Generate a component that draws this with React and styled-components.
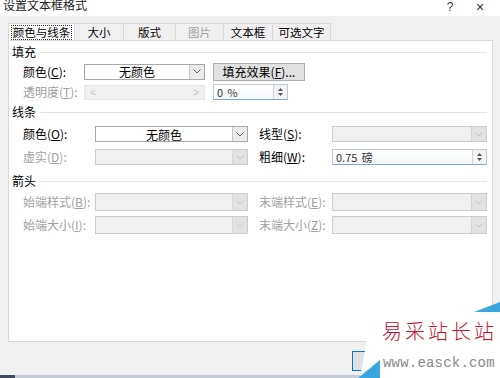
import React from 'react'
import styled, { createGlobalStyle } from 'styled-components'

const Global = createGlobalStyle`
  html, body { margin: 0; padding: 0; background: #f0f0f0; }
  body { font-family: "Noto Sans CJK SC", "Liberation Sans", sans-serif; font-size: 12px; color: #000; }
`

const Window = styled.div`
  position: relative;
  width: 500px;
  height: 378px;
  overflow: hidden;
  background: #f0f0f0;
  display: flex;
  flex-direction: column;
`

const TitleBar = styled.div`
  height: 16px;
  background: #fff;
  display: flex;
  align-items: flex-start;
  overflow: hidden;
`

const Title = styled.span`
  padding-left: 3px;
  flex: 1;
  color: #222;
  margin-top: -2px;
  line-height: 14px;
  font-size: 12px;
`

const TitleBtn = styled.span`
  width: ${p => p.w}px;
  text-align: center;
  color: #333;
  line-height: 14px;
  font-family: "Liberation Sans", sans-serif;
  font-size: ${p => p.fs}px;
`

const Tabs = styled.div`
  display: flex;
  margin: 7px 0 0 8px;
  height: 17px;
`

const Tab = styled.div`
  width: ${p => p.w}px;
  box-sizing: border-box;
  border: 1px solid #d9d9d9;
  border-bottom: none;
  margin-left: -1px;
  background: ${p => (p.active ? '#fff' : '#f0f0f0')};
  display: flex;
  align-items: center;
  justify-content: center;
  line-height: 13px;
  font-size: 11.5px;
  white-space: nowrap;
  color: ${p => (p.dim ? '#a0a0a0' : '#000')};
  &:first-child { margin-left: 0; }
  span {
    padding: 0 1px;
    border: ${p => (p.active ? '1px dotted #333' : '1px solid transparent')};
  }
`

const Panel = styled.div`
  margin: 0 7px 0 8px;
  height: 302px;
  box-sizing: border-box;
  border: 1px solid #d9d9d9;
  background: #fff;
  padding: 4px 5px 0 3px;
  display: flex;
  flex-direction: column;
`

const Section = styled.div`
  display: flex;
  flex-direction: column;
  gap: ${p => p.gap}px;
  margin-bottom: ${p => p.mb || 0}px;
`

const Header = styled.div`
  display: flex;
  align-items: center;
  gap: 4px;
  height: 14px;
  line-height: 14px;
  &::after {
    content: '';
    flex: 1;
    height: 1px;
    background: #e3e3e3;
  }
`

const Row = styled.div`
  display: flex;
  align-items: center;
  padding-left: 11px;
  height: ${p => p.h}px;
`

const Label = styled.div`
  width: ${p => p.w}px;
  flex-shrink: 0;
  color: ${p => (p.dim ? '#a0a0a0' : '#000')};
  line-height: 14px;
  white-space: nowrap;
  margin-left: ${p => p.ml || 0}px;
`

const ComboBox = styled.div`
  width: ${p => p.w}px;
  height: ${p => p.h}px;
  box-sizing: border-box;
  flex-shrink: 0;
  display: flex;
  border: 1px solid ${p => (p.disabled ? '#cccccc' : '#a8a8a8')};
  background: ${p => (p.disabled ? '#f0f0f0' : '#fff')};
`

const ComboText = styled.div`
  flex: 1;
  display: flex;
  align-items: center;
  justify-content: center;
  line-height: 13px;
`

const ArrowBox = styled.div`
  width: 14px;
  border-left: 1px solid ${p => (p.disabled ? '#d6d6d6' : '#c8c8c8')};
  background: ${p => (p.disabled ? '#e2e2e2' : '#ececec')};
  display: flex;
  align-items: center;
  justify-content: center;
`

const Button = styled.div`
  width: ${p => p.w}px;
  height: ${p => p.h}px;
  flex-shrink: 0;
  box-sizing: border-box;
  margin-left: ${p => p.ml || 0}px;
  border: 1px solid ${p => (p.primary ? '#0078d7' : '#adadad')};
  background: #e1e1e1;
  display: flex;
  align-items: center;
  justify-content: center;
  line-height: 13px;
`

const Slider = styled.div`
  width: 121px;
  height: 15px;
  box-sizing: border-box;
  border: 1px solid #e6e6e6;
  background: #f0f0f0;
  display: flex;
  align-items: center;
  justify-content: space-between;
  padding: 0 5px;
  color: #c4c4c4;
  font-family: "Liberation Sans", sans-serif;
  font-size: 10px;
`

const Spin = styled.div`
  width: ${p => p.w}px;
  height: ${p => p.h}px;
  box-sizing: border-box;
  margin-left: ${p => p.ml || 0}px;
  border: 1px solid #b9c9da;
  border-bottom-color: #7fa7d0;
  background: linear-gradient(#fff, #f4f7fb);
  display: flex;
`

const SpinText = styled.div`
  flex: 1;
  padding-left: 3px;
  display: flex;
  align-items: center;
  line-height: 13px;
  font-size: 11px;
  color: #333;
  word-spacing: 2px;
`

const SpinArrows = styled.div`
  width: 13px;
  border-left: 1px solid #d4d4d4;
  background: #f3f3f3;
  display: flex;
  flex-direction: column;
  align-items: center;
  justify-content: center;
  gap: 2px;
`

const Footer = styled.div`
  flex: 1;
  display: flex;
  align-items: flex-start;
  padding: 9px 0 0 352px;
  gap: 6px;
  overflow: hidden;
`

const Taskbar = styled.div`
  height: 3px;
  background: linear-gradient(90deg, #3f4c5c 0 15px, #c3ccd6 15px);
`

const Watermark = styled.div`
  position: absolute;
  right: 0;
  bottom: 0;
  width: 142px;
  height: 76px;
`

const MarkBg = styled.svg`
  position: absolute;
  inset: 0;
`

const MarkTitle = styled.div`
  position: absolute;
  left: 24px;
  top: 17px;
  color: #c8102e;
  font-size: 20px;
  letter-spacing: 3px;
  line-height: 24px;
  font-family: "Noto Sans CJK SC", serif;
  font-weight: 300;
  white-space: nowrap;
`

const MarkUrl = styled.div`
  position: absolute;
  left: 25px;
  top: 53px;
  color: #8a8a8a;
  font-family: "Liberation Mono", monospace;
  font-size: 14px;
  line-height: 16px;
  letter-spacing: 0.2px;
  white-space: nowrap;
`

const Chevron = ({ dim }) => (
  <svg width="8" height="5" viewBox="0 0 8 5">
    <path d="M0.5 0.5 L4 4 L7.5 0.5" fill="none" stroke={dim ? '#c4c4c4' : '#606060'} strokeWidth="1" />
  </svg>
)

const Tri = ({ up }) => (
  <svg width="5" height="3" viewBox="0 0 5 3">
    <path d={up ? 'M0 3 L2.5 0 L5 3 Z' : 'M0 0 L2.5 3 L5 0 Z'} fill="#555" />
  </svg>
)

const Combo = ({ w, h = 16, text, disabled }) => (
  <ComboBox w={w} h={h} disabled={disabled}>
    <ComboText>{text}</ComboText>
    <ArrowBox disabled={disabled}><Chevron dim={disabled} /></ArrowBox>
  </ComboBox>
)

const tabs = [
  { t: '颜色与线条', w: 67, active: true },
  { t: '大小', w: 50 },
  { t: '版式', w: 53 },
  { t: '图片', w: 49, dim: true },
  { t: '文本框', w: 50 },
  { t: '可选文字', w: 59 },
]

export default function App() {
  return (
    <Window>
      <Global />
      <TitleBar>
        <Title>设置文本框格式</Title>
        <TitleBtn w={20} fs={12}>?</TitleBtn>
        <TitleBtn w={40} fs={14}>×</TitleBtn>
      </TitleBar>

      <Tabs>
        {tabs.map(tab => (
          <Tab key={tab.t} w={tab.w} active={tab.active} dim={tab.dim}>
            <span>{tab.t}</span>
          </Tab>
        ))}
      </Tabs>

      <Panel>
        <Section gap={4} mb={5}>
          <Header>填充</Header>
          <Row h={17}>
            <Label w={61}>颜色(<u>C</u>):</Label>
            <Combo w={121} text="无颜色" />
            <Button w={92} h={18} ml={8}>填充效果(<u>F</u>)...</Button>
          </Row>
          <Row h={16}>
            <Label w={61} dim>透明度(<u>T</u>):</Label>
            <Slider><span>&lt;</span><span>&gt;</span></Slider>
            <Spin w={75} h={16} ml={8}>
              <SpinText>0 %</SpinText>
              <SpinArrows><Tri up /><Tri /></SpinArrows>
            </Spin>
          </Row>
        </Section>

        <Section gap={7} mb={9}>
          <Header>线条</Header>
          <Row h={16}>
            <Label w={72}>颜色(<u>O</u>):</Label>
            <Combo w={153} text="无颜色" />
            <Label w={73} ml={11}>线型(<u>S</u>):</Label>
            <Combo w={155} disabled />
          </Row>
          <Row h={16}>
            <Label w={72} dim>虚实(<u>D</u>):</Label>
            <Combo w={153} disabled />
            <Label w={73} ml={11}>粗细(<u>W</u>):</Label>
            <Spin w={155} h={16}>
              <SpinText>0.75 磅</SpinText>
              <SpinArrows><Tri up /><Tri /></SpinArrows>
            </Spin>
          </Row>
        </Section>

        <Section gap={5}>
          <Header>箭头</Header>
          <Row h={18}>
            <Label w={72} dim>始端样式(<u>B</u>):</Label>
            <Combo w={153} h={18} disabled />
            <Label w={73} ml={11} dim>末端样式(<u>E</u>):</Label>
            <Combo w={155} h={18} disabled />
          </Row>
          <Row h={18}>
            <Label w={72} dim>始端大小(<u>I</u>):</Label>
            <Combo w={153} h={18} disabled />
            <Label w={73} ml={11} dim>末端大小(<u>Z</u>):</Label>
            <Combo w={155} h={18} disabled />
          </Row>
        </Section>
      </Panel>

      <Footer>
        <Button w={75} h={20} primary />
        <Button w={75} h={20} />
      </Footer>
      <Taskbar />

      <Watermark>
        <MarkBg width="142" height="76" viewBox="0 0 142 76">
          <path d="M14 10 L142 6 L142 76 L2 76 Z" fill="#fff" />
          <path d="M116 10 L142 0 L142 10 Z" fill="#39a6df" />
          <path d="M0 76 L22 58 L22 76 Z" fill="#39a6df" />
        </MarkBg>
        <MarkTitle>易采站长站</MarkTitle>
        <MarkUrl>www.easck.com</MarkUrl>
      </Watermark>
    </Window>
  )
}
